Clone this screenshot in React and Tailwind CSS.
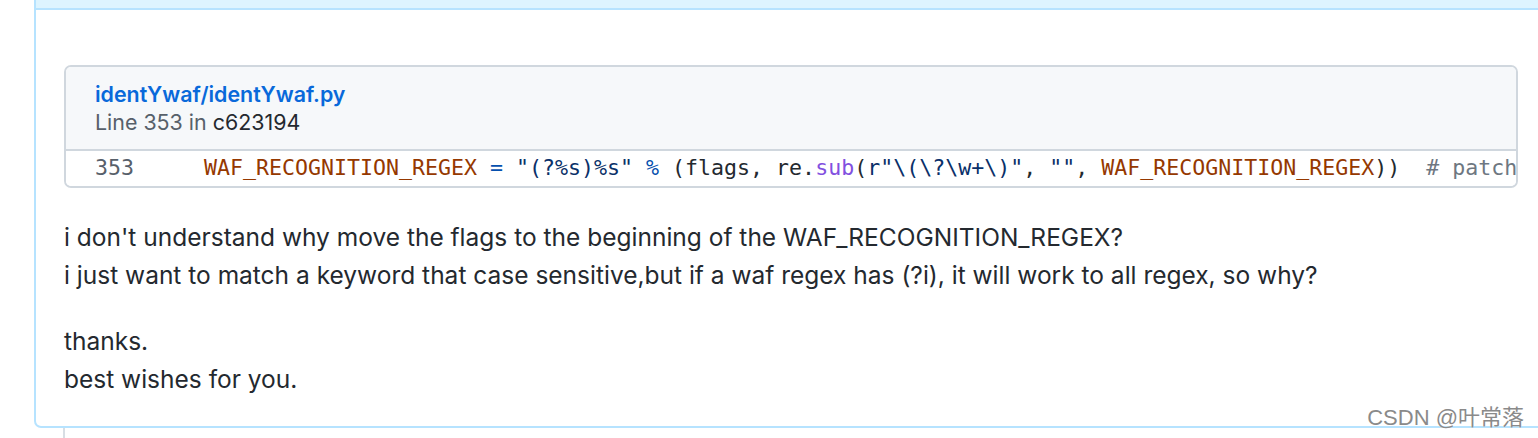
import React from "react";

const sans = { fontFamily: '"Inter", "Liberation Sans", "Noto Sans CJK SC", sans-serif' };
const mono = { fontFamily: '"DejaVu Sans Mono", "Liberation Mono", monospace' };

export default function App() {
  return (
    <div className="relative w-[1538px] h-[438px] overflow-hidden bg-white" style={sans}>
      <div className="ml-[34px] w-[1520px] flex flex-col">
        <div className="w-full rounded-b-[7px] border-x-2 border-b-2 border-[#b6e3ff] overflow-hidden">
          <div className="h-[10px] bg-[#ddf4ff] border-b-2 border-[#b6e3ff]"></div>
          <div className="pt-[55px] pl-[28px] pr-[30px] pb-[28px]">
            <div className="w-[1454px] rounded-[7px] border-2 border-[#d0d7de] overflow-hidden">
              <div className="bg-[#f6f8fa] pl-[29px] pt-[13px] pb-[13px] border-b-2 border-[#d0d7de]">
                <div className="text-[21.4px] leading-[28px] font-semibold text-[#0969da]">identYwaf/identYwaf.py</div>
                <div className="text-[21.4px] leading-[28px] text-[#57606a]">
                  Line 353 in <span className="text-[#24292f]">c623194</span>
                </div>
              </div>
              <div className="flex items-center h-[35px] bg-white whitespace-pre text-[21.6px]" style={mono}>
                <div className="w-[138px] shrink-0 pl-[29px] text-[#57606a]">353</div>
                <div className="text-[#24292f]">
                  <span className="text-[#953800]">WAF_RECOGNITION_REGEX</span>
                  <span> </span>
                  <span className="text-[#0550ae]">=</span>
                  <span> </span>
                  <span className="text-[#0a3069]">"(?%s)%s"</span>
                  <span> </span>
                  <span className="text-[#0550ae]">%</span>
                  <span> (flags, re.</span>
                  <span className="text-[#8250df]">sub</span>
                  <span>(</span>
                  <span className="text-[#0a3069]">{'r"\\(\\?\\w+\\)"'}</span>
                  <span>{", "}</span>
                  <span className="text-[#0a3069]">""</span>
                  <span>{", "}</span>
                  <span className="text-[#953800]">WAF_RECOGNITION_REGEX</span>
                  <span>{"))  "}</span>
                  <span className="text-[#6e7781]">{"# patch"}</span>
                </div>
              </div>
            </div>
            <div className="mt-[31px] text-[24.5px] leading-[37.5px] text-[#24292f]">
              <p>i don't understand why move the flags to the beginning of the WAF_RECOGNITION_REGEX?</p>
              <p>i just want to match a keyword that case sensitive,but if a waf regex has (?i), it will work to all regex, so why?</p>
              <p className="mt-[29px]">thanks.</p>
              <p>best wishes for you.</p>
            </div>
          </div>
        </div>
        <div className="ml-[29px] w-[2px] h-[20px] bg-[#d8dee4]"></div>
      </div>
      <div
        className="absolute right-[14px] top-[406px] text-[22px] leading-[24px] text-[#8a8a8a]"
        style={{ fontFamily: '"Liberation Sans", "Noto Sans CJK SC", sans-serif', textShadow: "0 0 1px #fff" }}
      >
        CSDN @叶常落
      </div>
    </div>
  );
}
